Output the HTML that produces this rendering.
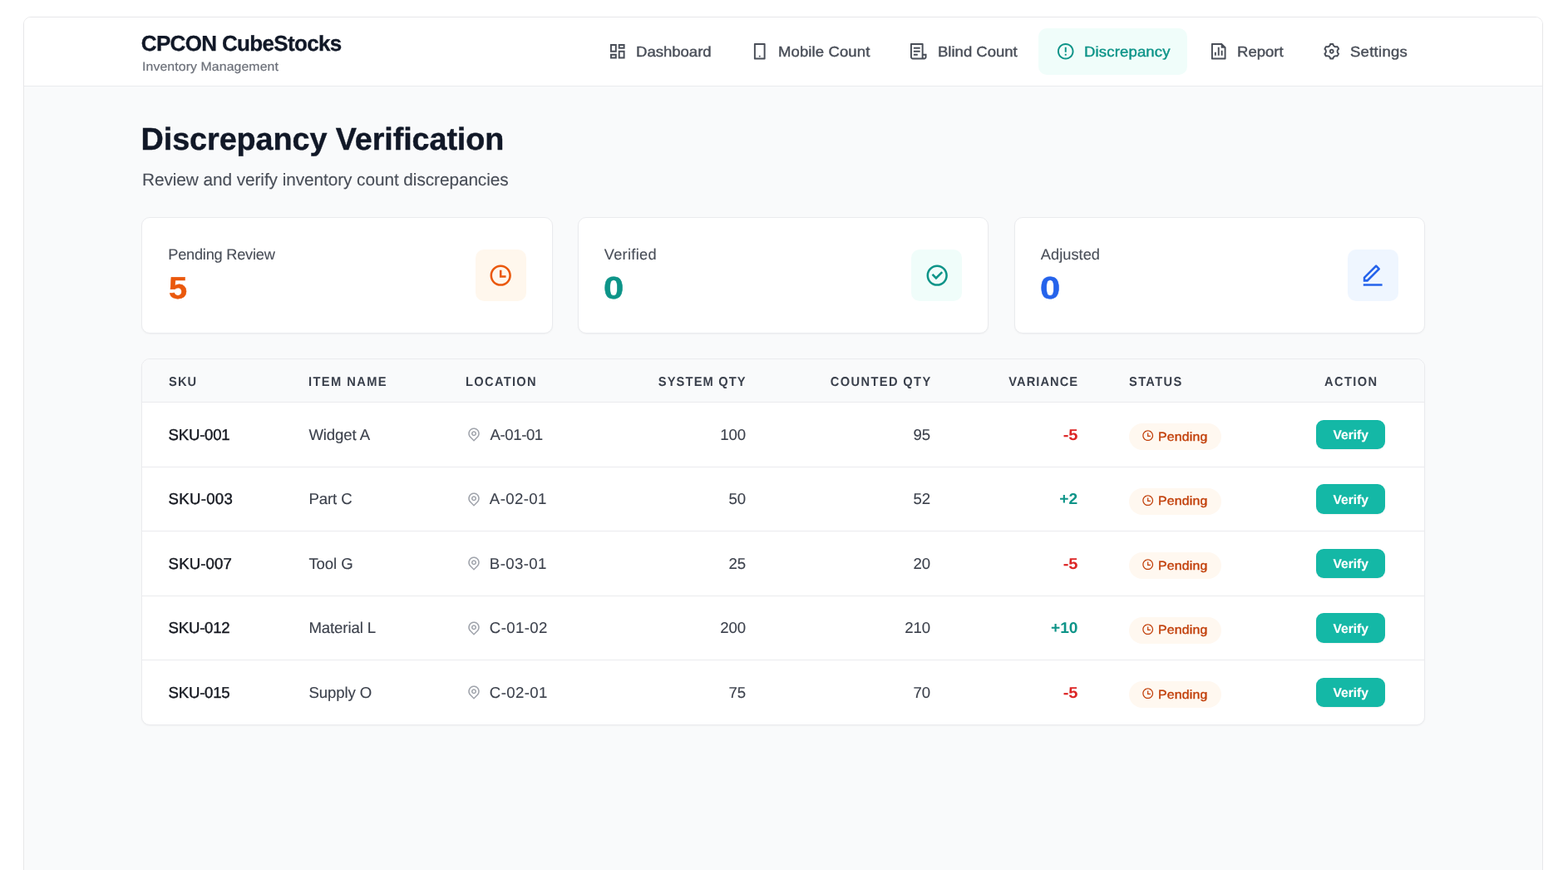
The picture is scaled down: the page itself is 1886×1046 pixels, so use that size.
<!DOCTYPE html>
<html lang="en">
<head>
<meta charset="utf-8">
<title>CPCON CubeStocks - Discrepancy Verification</title>
<style>
*{box-sizing:border-box;margin:0;padding:0}
html,body{width:1886px;height:1046px;overflow:hidden;background:#fff}
body{font-family:"Liberation Sans",sans-serif;color:#111827;text-rendering:geometricPrecision}
.ic{display:block;fill:currentColor;flex:none}
.t{display:inline-block;white-space:nowrap}
.frame{will-change:transform;position:absolute;left:28px;top:20px;width:1828px;height:1100px;border:1px solid #e7e7e9;border-radius:9px 9px 0 0;background:#f9fafb;overflow:hidden}
.topbar{height:83px;background:#fff;border-bottom:1px solid #eaebee}
.wrap{width:1542px;margin:0 auto;height:82px;display:flex;align-items:center;justify-content:space-between}
.brand{padding-top:0}
.brand-title{display:block;font-size:26px;line-height:36px;font-weight:700;color:#111827;letter-spacing:-0.66px;margin-left:-1.2px;-webkit-text-stroke:0.3px currentColor}
.brand-sub{display:inline-block;vertical-align:top;font-size:15px;line-height:20.5px;color:#6c7079;letter-spacing:0.1px;margin-left:-0.3px;position:relative;top:1px;-webkit-text-stroke:0.2px currentColor;transform:scaleX(1.055);transform-origin:0 50%}
.nav{display:flex;align-items:center;gap:5.14px;margin-right:-0.5px}
.nav-item{display:flex;align-items:center;height:56.5px;padding:0 0 0 20.56px;border-radius:10px;color:#494e58;font-size:17.4px;white-space:nowrap;-webkit-text-stroke:0.4px currentColor}
.nav-item .t{transform:scaleX(1.065);transform-origin:0 50%}
.nav-item .nav-ic{width:23.5px;height:23.5px;margin:0 11.1px 0 -0.3px}
.nav-item.active{background:#f0fdfa;color:#0d9488}
.n1{width:165.76px}.n2{width:186.56px}.n3{width:171.56px}.n4{width:179.16px;margin-left:-0.6px;padding-left:21.16px}.n5{width:130.96px}.n6{width:144px}
.n2 .t{letter-spacing:0.1px}.n4 .t{letter-spacing:0.15px;margin-left:-0.4px}.n6 .t{letter-spacing:0.25px}
.main{width:1543.4px;margin:0 0 0 141.4px;padding-top:41px}
.page-title{display:block;font-size:37.8px;line-height:46.3px;font-weight:700;color:#111827;letter-spacing:-0.1px;margin-left:-0.8px;-webkit-text-stroke:0.4px currentColor}
.page-sub{display:block;margin-top:11px;margin-left:0.6px;font-size:20.8px;line-height:30.8px;color:#494e58;letter-spacing:-0.07px;-webkit-text-stroke:0.12px currentColor}
.cards{display:flex;gap:30.3px;margin-top:28.1px}
.card{flex:1 1 0;height:139.8px;padding-bottom:1px;background:#fff;border:1px solid #eaebee;border-radius:10px;box-shadow:0 1px 2px rgba(0,0,0,.04);padding:0 30.6px 0 30.84px;display:flex;align-items:center;justify-content:space-between}
.card-text{align-self:flex-start;padding-top:32px}
.card-label{display:block;font-size:18.2px;line-height:25.7px;color:#494e58;letter-spacing:-0.22px;-webkit-text-stroke:0.12px currentColor}
.card-num{display:block;font-size:37.6px;line-height:46.3px;font-weight:700;margin-top:3.4px;margin-left:0.9px;-webkit-text-stroke:0.5px currentColor}
.card.teal .card-label{letter-spacing:0.3px}.card.blue .card-label{letter-spacing:0.05px;margin-left:0.5px}
.card-num{transform-origin:0 50%}
.card.orange .card-num{color:#ea580c;transform:scaleX(1.06)}.card.teal .card-num{color:#0d9488;transform:scaleX(1.16);margin-left:-0.6px}.card.blue .card-num{color:#2563eb;transform:scaleX(1.16);margin-left:-0.6px}
.card-icon{width:61.2px;height:61.2px;border-radius:10px;display:flex;align-items:center;justify-content:center;position:relative;left:-0.3px;top:0}
.card-ic{width:30.4px;height:30.4px;position:relative;left:0;top:0.5px}
.card.orange .card-icon{background:#fff7ed;color:#ea580c}
.card.teal .card-icon{background:#f0fdfa;color:#0d9488}
.card.blue .card-icon{background:#eff6ff;color:#2563eb}
.table-card{margin-top:30px;height:441px;background:#fff;border:1px solid #eaebee;border-radius:10px;box-shadow:0 1px 2px rgba(0,0,0,.04);overflow:hidden}
table{width:1541.4px;border-collapse:separate;border-spacing:0;table-layout:fixed}
th,td{padding:0 30.84px 0 31.2px;text-align:left;vertical-align:middle;white-space:nowrap}
th{height:52.5px;padding-top:4.6px;background:#f9fafb;font-size:15.6px;font-weight:700;color:#3a404c;text-transform:uppercase;letter-spacing:1.2px;border-bottom:1px solid #eaebee}
td{height:77.5px;font-size:18.6px;color:#3c414c;-webkit-text-stroke:0.12px currentColor;border-bottom:1px solid #eaebee;letter-spacing:-0.1px}
tbody tr:last-child td{border-bottom:0;height:76.5px}
.c-sku{width:168.8px}.c-name{width:188.9px}.c-loc{width:190px}.c-sys{width:208.7px}.c-cnt{width:222px}.c-var{width:177.2px}
.c-status{width:208.4px}.c-action{width:177.4px}
th.c-sys,td.c-sys,th.c-cnt,td.c-cnt,th.c-var,td.c-var{text-align:right}
th.c-action,td.c-action{text-align:center}
td.c-sku{color:#14171f;-webkit-text-stroke:0.4px currentColor;letter-spacing:-0.22px}
.loc{display:flex;align-items:center}
.pin-ic{width:18px;height:18px;color:#9fa3ab;margin-right:10.6px;position:relative;left:0.4px;top:-0.5px}
td.c-var{font-weight:700;-webkit-text-stroke:0}
td.c-var .t{transform:scaleX(1.08);transform-origin:100% 50%}
td.c-var.pos .t{transform:scaleX(1.03)}
td.c-var.neg{color:#dc2626}td.c-var.pos{color:#0d9488}
.badge{display:inline-flex;align-items:center;vertical-align:middle;height:32px;width:110.6px;padding:0 0 0 14.7px;border-radius:16px;background:#fff8f0;color:#c2410c;font-size:14.8px;-webkit-text-stroke:0.4px currentColor;letter-spacing:0.2px;position:relative;top:2.3px;left:0.1px}
.badge .t{transform:scaleX(1.07);transform-origin:0 50%;position:relative;top:0.9px;left:-0.5px}
.badge-ic{width:15.4px;height:15.4px;margin-right:5.3px;position:relative;top:-1.3px}
.btn{text-rendering:geometricPrecision;display:inline-flex;align-items:center;justify-content:center;vertical-align:middle;height:35.5px;width:83px;padding:3.8px 0 0 0;position:relative;left:0.5px;top:-0.4px;border:0;border-radius:9px;background:#14b8a6;color:#fff;font-family:inherit;font-size:15.6px;font-weight:700;box-shadow:0 1px 2px rgba(0,0,0,.05)}
tbody tr:nth-child(2) .c-sku .t{letter-spacing:0.3px}
tbody tr:nth-child(3) .c-sku .t{letter-spacing:0.15px}
td.c-loc .t{letter-spacing:0.4px}
tbody tr:nth-child(1) td.c-loc .t{letter-spacing:-0.4px;margin-left:0.6px}
th .t{transform:scaleX(0.94);transform-origin:0 50%}
th.c-sys .t,th.c-cnt .t,th.c-var .t{transform-origin:100% 50%;margin-right:-1.2px}
th.c-action .t{transform-origin:50% 50%;margin-right:-1.2px;letter-spacing:1.45px}
th.c-name .t{letter-spacing:1.5px}th.c-loc .t{letter-spacing:1.4px}th.c-status .t{letter-spacing:1.45px}
th.c-sys .t{margin-right:-0.3px;letter-spacing:1.22px}th.c-cnt .t{letter-spacing:1.46px;margin-right:-1.4px}th.c-var .t{margin-right:-0.8px;letter-spacing:1.1px}

</style>
</head>
<body>
<div class="frame">
  <header class="topbar">
    <div class="wrap">
      <div class="brand">
        <h1 class="brand-title t">CPCON CubeStocks</h1>
        <p class="brand-sub t">Inventory Management</p>
      </div>
      <nav class="nav">
        <a class="nav-item n1"><svg class="ic nav-ic" viewBox="0 0 24 24" aria-hidden="true"><path d="M13 21V11H21V21H13ZM3 13V3H11V13H3ZM9 11V5H5V11H9ZM3 21V15H11V21H3ZM5 19H9V17H5V19ZM15 19H19V13H15V19ZM13 3H21V9H13V3ZM15 5V7H19V5H15Z"/></svg><span class="t">Dashboard</span></a>
        <a class="nav-item n2"><svg class="ic nav-ic" viewBox="0 0 24 24" aria-hidden="true"><path d="M7 4V20H17V4H7ZM6 2H18C18.5523 2 19 2.44772 19 3V21C19 21.5523 18.5523 22 18 22H6C5.44772 22 5 21.5523 5 21V3C5 2.44772 5.44772 2 6 2ZM12 17C12.5523 17 13 17.4477 13 18C13 18.5523 12.5523 19 12 19C11.4477 19 11 18.5523 11 18C11 17.4477 11.4477 17 12 17Z"/></svg><span class="t">Mobile Count</span></a>
        <a class="nav-item n3"><svg class="ic nav-ic" viewBox="0 0 24 24" aria-hidden="true"><path d="M19 22H5C3.34315 22 2 20.6569 2 19V3C2 2.44772 2.44772 2 3 2H17C17.5523 2 18 2.44772 18 3V15H22V19C22 20.6569 20.6569 22 19 22ZM18 17V19C18 19.5523 18.4477 20 19 20C19.5523 20 20 19.5523 20 19V17H18ZM16 20V4H4V19C4 19.5523 4.44772 20 5 20H16ZM6 7H14V9H6V7ZM6 11H14V13H6V11ZM6 15H11V17H6V15Z"/></svg><span class="t">Blind Count</span></a>
        <a class="nav-item n4 active"><svg class="ic nav-ic" viewBox="0 0 24 24" aria-hidden="true"><path d="M12 22C6.47715 22 2 17.5228 2 12C2 6.47715 6.47715 2 12 2C17.5228 2 22 6.47715 22 12C22 17.5228 17.5228 22 12 22ZM12 20C16.4183 20 20 16.4183 20 12C20 7.58172 16.4183 4 12 4C7.58172 4 4 7.58172 4 12C4 16.4183 7.58172 20 12 20ZM11 15H13V17H11V15ZM11 7H13V13H11V7Z"/></svg><span class="t">Discrepancy</span></a>
        <a class="nav-item n5"><svg class="ic nav-ic" viewBox="0 0 24 24" aria-hidden="true"><path d="M11 7H13V17H11V7ZM15 11H17V17H15V11ZM7 13H9V17H7V13ZM15 4H5V20H19V8H15V4ZM3 2.9918C3 2.44405 3.44749 2 3.9985 2H16L20.9997 7L21 20.9925C21 21.5489 20.5551 22 20.0066 22H3.9934C3.44476 22 3 21.5447 3 21.0082V2.9918Z"/></svg><span class="t">Report</span></a>
        <a class="nav-item n6"><svg class="ic nav-ic" viewBox="0 0 24 24" aria-hidden="true"><path d="M3.33946 17.0002C2.90721 16.2515 2.58277 15.4702 2.36133 14.6741C3.3338 14.1779 3.99972 13.1668 3.99972 12.0002C3.99972 10.8345 3.3348 9.824 2.36353 9.32741C2.81025 7.71651 3.65857 6.21627 4.86474 4.99001C5.7807 5.58416 6.98935 5.65534 7.99972 5.072C9.01009 4.48866 9.55277 3.40635 9.4962 2.31604C11.1613 1.8846 12.8847 1.90004 14.5031 2.31862C14.4475 3.40806 14.9901 4.48912 15.9997 5.072C17.0101 5.65532 18.2187 5.58416 19.1346 4.99007C19.7133 5.57986 20.2277 6.25151 20.66 7.00021C21.0922 7.7489 21.4167 8.53025 21.6381 9.32628C20.6656 9.82247 19.9997 10.8336 19.9997 12.0002C19.9997 13.166 20.6646 14.1764 21.6359 14.673C21.1892 16.2839 20.3409 17.7841 19.1347 19.0104C18.2187 18.4163 17.0101 18.3451 15.9997 18.9284C14.9893 19.5117 14.4467 20.5941 14.5032 21.6844C12.8382 22.1158 11.1148 22.1004 9.49633 21.6818C9.55191 20.5923 9.00929 19.5113 7.99972 18.9284C6.98938 18.3451 5.78079 18.4162 4.86484 19.0103C4.28617 18.4205 3.77172 17.7489 3.33946 17.0002ZM8.99972 17.1964C10.0911 17.8265 10.8749 18.8227 11.2503 19.9659C11.7486 20.0133 12.2502 20.014 12.7486 19.9675C13.1238 18.8237 13.9078 17.8268 14.9997 17.1964C16.0916 16.5659 17.347 16.3855 18.5252 16.6324C18.8146 16.224 19.0648 15.7892 19.2729 15.334C18.4706 14.4373 17.9997 13.2604 17.9997 12.0002C17.9997 10.74 18.4706 9.5632 19.2729 8.6665C19.1688 8.4405 19.0538 8.21822 18.9279 8.00021C18.802 7.78219 18.667 7.57148 18.5233 7.36842C17.3457 7.61476 16.0911 7.43414 14.9997 6.80405C13.9083 6.17395 13.1246 5.17768 12.7491 4.03455C12.2509 3.98714 11.7492 3.98646 11.2509 4.03292C10.8756 5.17671 10.0916 6.17364 8.99972 6.80405C7.9078 7.43447 6.65245 7.61494 5.47428 7.36803C5.18485 7.77641 4.93463 8.21117 4.72656 8.66637C5.52881 9.56311 5.99972 10.74 5.99972 12.0002C5.99972 13.2604 5.52883 14.4372 4.72656 15.3339C4.83067 15.5599 4.94564 15.7822 5.07152 16.0002C5.19739 16.2182 5.3324 16.4289 5.47612 16.632C6.65377 16.3857 7.90838 16.5663 8.99972 17.1964ZM11.9997 15.0002C10.3429 15.0002 8.99972 13.6571 8.99972 12.0002C8.99972 10.3434 10.3429 9.00021 11.9997 9.00021C13.6566 9.00021 14.9997 10.3434 14.9997 12.0002C14.9997 13.6571 13.6566 15.0002 11.9997 15.0002ZM11.9997 13.0002C12.552 13.0002 12.9997 12.5525 12.9997 12.0002C12.9997 11.4479 12.552 11.0002 11.9997 11.0002C11.4475 11.0002 10.9997 11.4479 10.9997 12.0002C10.9997 12.5525 11.4475 13.0002 11.9997 13.0002Z"/></svg><span class="t">Settings</span></a>
      </nav>
    </div>
  </header>
  <main class="main">
    <div class="page-head">
      <h2 class="page-title t">Discrepancy Verification</h2>
      <p class="page-sub t">Review and verify inventory count discrepancies</p>
    </div>
    <div class="cards">
      <section class="card orange">
        <div class="card-text"><p class="card-label t">Pending Review</p><p class="card-num t">5</p></div>
        <div class="card-icon"><svg class="ic card-ic" viewBox="0 0 24 24" aria-hidden="true"><path d="M12 22C6.47715 22 2 17.5228 2 12C2 6.47715 6.47715 2 12 2C17.5228 2 22 6.47715 22 12C22 17.5228 17.5228 22 12 22ZM12 20C16.4183 20 20 16.4183 20 12C20 7.58172 16.4183 4 12 4C7.58172 4 4 7.58172 4 12C4 16.4183 7.58172 20 12 20ZM13 12H17V14H11V7H13V12Z"/></svg></div>
      </section>
      <section class="card teal">
        <div class="card-text"><p class="card-label t">Verified</p><p class="card-num t">0</p></div>
        <div class="card-icon"><svg class="ic card-ic" viewBox="0 0 24 24" aria-hidden="true"><path d="M4 12C4 7.58172 7.58172 4 12 4C16.4183 4 20 7.58172 20 12C20 16.4183 16.4183 20 12 20C7.58172 20 4 16.4183 4 12ZM12 2C6.47715 2 2 6.47715 2 12C2 17.5228 6.47715 22 12 22C17.5228 22 22 17.5228 22 12C22 6.47715 17.5228 2 12 2ZM17.4571 9.45711L16.0429 8.04289L11 13.0858L8.20711 10.2929L6.79289 11.7071L11 15.9142L17.4571 9.45711Z"/></svg></div>
      </section>
      <section class="card blue">
        <div class="card-text"><p class="card-label t">Adjusted</p><p class="card-num t">0</p></div>
        <div class="card-icon"><svg class="ic card-ic" viewBox="0 0 24 24" aria-hidden="true"><path d="M6.41421 15.89L16.5563 5.74785L15.1421 4.33363L5 14.4758V15.89H6.41421ZM7.24264 17.89H3V13.6473L14.435 2.21231C14.8256 1.82179 15.4587 1.82179 15.8492 2.21231L18.6777 5.04074C19.0682 5.43126 19.0682 6.06443 18.6777 6.45495L7.24264 17.89ZM3 19.89H21V21.89H3V19.89Z"/></svg></div>
      </section>
    </div>
    <div class="table-card">
      <table>
        <thead>
          <tr>
            <th class="c-sku"><span class="t">SKU</span></th>
            <th class="c-name"><span class="t">Item Name</span></th>
            <th class="c-loc"><span class="t">Location</span></th>
            <th class="c-sys"><span class="t">System Qty</span></th>
            <th class="c-cnt"><span class="t">Counted Qty</span></th>
            <th class="c-var"><span class="t">Variance</span></th>
            <th class="c-status"><span class="t">Status</span></th>
            <th class="c-action"><span class="t">Action</span></th>
          </tr>
        </thead>
        <tbody>
          <tr>
            <td class="c-sku"><span class="t">SKU-001</span></td>
            <td class="c-name"><span class="t">Widget A</span></td>
            <td class="c-loc"><span class="loc"><svg class="ic pin-ic" viewBox="0 0 24 24" aria-hidden="true"><path d="M12 23.7279L5.63604 17.364C2.12132 13.8492 2.12132 8.15076 5.63604 4.63604C9.15076 1.12132 14.8492 1.12132 18.364 4.63604C21.8787 8.15076 21.8787 13.8492 18.364 17.364L12 23.7279ZM16.9497 15.9497C19.6834 13.2161 19.6834 8.78392 16.9497 6.05025C14.2161 3.31658 9.78392 3.31658 7.05025 6.05025C4.31658 8.78392 4.31658 13.2161 7.05025 15.9497L12 20.8995L16.9497 15.9497ZM12 13C13.1046 13 14 12.1046 14 11C14 9.89543 13.1046 9 12 9C10.8954 9 10 9.89543 10 11C10 12.1046 10.8954 13 12 13ZM12 15C9.79086 15 8 13.2091 8 11C8 8.79086 9.79086 7 12 7C14.2091 7 16 8.79086 16 11C16 13.2091 14.2091 15 12 15Z"/></svg><span class="t">A-01-01</span></span></td>
            <td class="c-sys"><span class="t">100</span></td>
            <td class="c-cnt"><span class="t">95</span></td>
            <td class="c-var neg"><span class="t">-5</span></td>
            <td class="c-status"><span class="badge"><svg class="ic badge-ic" viewBox="0 0 24 24" aria-hidden="true"><path d="M12 22C6.47715 22 2 17.5228 2 12C2 6.47715 6.47715 2 12 2C17.5228 2 22 6.47715 22 12C22 17.5228 17.5228 22 12 22ZM12 20C16.4183 20 20 16.4183 20 12C20 7.58172 16.4183 4 12 4C7.58172 4 4 7.58172 4 12C4 16.4183 7.58172 20 12 20ZM13 12H17V14H11V7H13V12Z"/></svg><span class="t">Pending</span></span></td>
            <td class="c-action"><button type="button" class="btn"><span class="t">Verify</span></button></td>
          </tr>
          <tr>
            <td class="c-sku"><span class="t">SKU-003</span></td>
            <td class="c-name"><span class="t">Part C</span></td>
            <td class="c-loc"><span class="loc"><svg class="ic pin-ic" viewBox="0 0 24 24" aria-hidden="true"><path d="M12 23.7279L5.63604 17.364C2.12132 13.8492 2.12132 8.15076 5.63604 4.63604C9.15076 1.12132 14.8492 1.12132 18.364 4.63604C21.8787 8.15076 21.8787 13.8492 18.364 17.364L12 23.7279ZM16.9497 15.9497C19.6834 13.2161 19.6834 8.78392 16.9497 6.05025C14.2161 3.31658 9.78392 3.31658 7.05025 6.05025C4.31658 8.78392 4.31658 13.2161 7.05025 15.9497L12 20.8995L16.9497 15.9497ZM12 13C13.1046 13 14 12.1046 14 11C14 9.89543 13.1046 9 12 9C10.8954 9 10 9.89543 10 11C10 12.1046 10.8954 13 12 13ZM12 15C9.79086 15 8 13.2091 8 11C8 8.79086 9.79086 7 12 7C14.2091 7 16 8.79086 16 11C16 13.2091 14.2091 15 12 15Z"/></svg><span class="t">A-02-01</span></span></td>
            <td class="c-sys"><span class="t">50</span></td>
            <td class="c-cnt"><span class="t">52</span></td>
            <td class="c-var pos"><span class="t">+2</span></td>
            <td class="c-status"><span class="badge"><svg class="ic badge-ic" viewBox="0 0 24 24" aria-hidden="true"><path d="M12 22C6.47715 22 2 17.5228 2 12C2 6.47715 6.47715 2 12 2C17.5228 2 22 6.47715 22 12C22 17.5228 17.5228 22 12 22ZM12 20C16.4183 20 20 16.4183 20 12C20 7.58172 16.4183 4 12 4C7.58172 4 4 7.58172 4 12C4 16.4183 7.58172 20 12 20ZM13 12H17V14H11V7H13V12Z"/></svg><span class="t">Pending</span></span></td>
            <td class="c-action"><button type="button" class="btn"><span class="t">Verify</span></button></td>
          </tr>
          <tr>
            <td class="c-sku"><span class="t">SKU-007</span></td>
            <td class="c-name"><span class="t">Tool G</span></td>
            <td class="c-loc"><span class="loc"><svg class="ic pin-ic" viewBox="0 0 24 24" aria-hidden="true"><path d="M12 23.7279L5.63604 17.364C2.12132 13.8492 2.12132 8.15076 5.63604 4.63604C9.15076 1.12132 14.8492 1.12132 18.364 4.63604C21.8787 8.15076 21.8787 13.8492 18.364 17.364L12 23.7279ZM16.9497 15.9497C19.6834 13.2161 19.6834 8.78392 16.9497 6.05025C14.2161 3.31658 9.78392 3.31658 7.05025 6.05025C4.31658 8.78392 4.31658 13.2161 7.05025 15.9497L12 20.8995L16.9497 15.9497ZM12 13C13.1046 13 14 12.1046 14 11C14 9.89543 13.1046 9 12 9C10.8954 9 10 9.89543 10 11C10 12.1046 10.8954 13 12 13ZM12 15C9.79086 15 8 13.2091 8 11C8 8.79086 9.79086 7 12 7C14.2091 7 16 8.79086 16 11C16 13.2091 14.2091 15 12 15Z"/></svg><span class="t">B-03-01</span></span></td>
            <td class="c-sys"><span class="t">25</span></td>
            <td class="c-cnt"><span class="t">20</span></td>
            <td class="c-var neg"><span class="t">-5</span></td>
            <td class="c-status"><span class="badge"><svg class="ic badge-ic" viewBox="0 0 24 24" aria-hidden="true"><path d="M12 22C6.47715 22 2 17.5228 2 12C2 6.47715 6.47715 2 12 2C17.5228 2 22 6.47715 22 12C22 17.5228 17.5228 22 12 22ZM12 20C16.4183 20 20 16.4183 20 12C20 7.58172 16.4183 4 12 4C7.58172 4 4 7.58172 4 12C4 16.4183 7.58172 20 12 20ZM13 12H17V14H11V7H13V12Z"/></svg><span class="t">Pending</span></span></td>
            <td class="c-action"><button type="button" class="btn"><span class="t">Verify</span></button></td>
          </tr>
          <tr>
            <td class="c-sku"><span class="t">SKU-012</span></td>
            <td class="c-name"><span class="t">Material L</span></td>
            <td class="c-loc"><span class="loc"><svg class="ic pin-ic" viewBox="0 0 24 24" aria-hidden="true"><path d="M12 23.7279L5.63604 17.364C2.12132 13.8492 2.12132 8.15076 5.63604 4.63604C9.15076 1.12132 14.8492 1.12132 18.364 4.63604C21.8787 8.15076 21.8787 13.8492 18.364 17.364L12 23.7279ZM16.9497 15.9497C19.6834 13.2161 19.6834 8.78392 16.9497 6.05025C14.2161 3.31658 9.78392 3.31658 7.05025 6.05025C4.31658 8.78392 4.31658 13.2161 7.05025 15.9497L12 20.8995L16.9497 15.9497ZM12 13C13.1046 13 14 12.1046 14 11C14 9.89543 13.1046 9 12 9C10.8954 9 10 9.89543 10 11C10 12.1046 10.8954 13 12 13ZM12 15C9.79086 15 8 13.2091 8 11C8 8.79086 9.79086 7 12 7C14.2091 7 16 8.79086 16 11C16 13.2091 14.2091 15 12 15Z"/></svg><span class="t">C-01-02</span></span></td>
            <td class="c-sys"><span class="t">200</span></td>
            <td class="c-cnt"><span class="t">210</span></td>
            <td class="c-var pos"><span class="t">+10</span></td>
            <td class="c-status"><span class="badge"><svg class="ic badge-ic" viewBox="0 0 24 24" aria-hidden="true"><path d="M12 22C6.47715 22 2 17.5228 2 12C2 6.47715 6.47715 2 12 2C17.5228 2 22 6.47715 22 12C22 17.5228 17.5228 22 12 22ZM12 20C16.4183 20 20 16.4183 20 12C20 7.58172 16.4183 4 12 4C7.58172 4 4 7.58172 4 12C4 16.4183 7.58172 20 12 20ZM13 12H17V14H11V7H13V12Z"/></svg><span class="t">Pending</span></span></td>
            <td class="c-action"><button type="button" class="btn"><span class="t">Verify</span></button></td>
          </tr>
          <tr>
            <td class="c-sku"><span class="t">SKU-015</span></td>
            <td class="c-name"><span class="t">Supply O</span></td>
            <td class="c-loc"><span class="loc"><svg class="ic pin-ic" viewBox="0 0 24 24" aria-hidden="true"><path d="M12 23.7279L5.63604 17.364C2.12132 13.8492 2.12132 8.15076 5.63604 4.63604C9.15076 1.12132 14.8492 1.12132 18.364 4.63604C21.8787 8.15076 21.8787 13.8492 18.364 17.364L12 23.7279ZM16.9497 15.9497C19.6834 13.2161 19.6834 8.78392 16.9497 6.05025C14.2161 3.31658 9.78392 3.31658 7.05025 6.05025C4.31658 8.78392 4.31658 13.2161 7.05025 15.9497L12 20.8995L16.9497 15.9497ZM12 13C13.1046 13 14 12.1046 14 11C14 9.89543 13.1046 9 12 9C10.8954 9 10 9.89543 10 11C10 12.1046 10.8954 13 12 13ZM12 15C9.79086 15 8 13.2091 8 11C8 8.79086 9.79086 7 12 7C14.2091 7 16 8.79086 16 11C16 13.2091 14.2091 15 12 15Z"/></svg><span class="t">C-02-01</span></span></td>
            <td class="c-sys"><span class="t">75</span></td>
            <td class="c-cnt"><span class="t">70</span></td>
            <td class="c-var neg"><span class="t">-5</span></td>
            <td class="c-status"><span class="badge"><svg class="ic badge-ic" viewBox="0 0 24 24" aria-hidden="true"><path d="M12 22C6.47715 22 2 17.5228 2 12C2 6.47715 6.47715 2 12 2C17.5228 2 22 6.47715 22 12C22 17.5228 17.5228 22 12 22ZM12 20C16.4183 20 20 16.4183 20 12C20 7.58172 16.4183 4 12 4C7.58172 4 4 7.58172 4 12C4 16.4183 7.58172 20 12 20ZM13 12H17V14H11V7H13V12Z"/></svg><span class="t">Pending</span></span></td>
            <td class="c-action"><button type="button" class="btn"><span class="t">Verify</span></button></td>
          </tr>
        </tbody>
      </table>
    </div>
  </main>
</div>
</body>
</html>
